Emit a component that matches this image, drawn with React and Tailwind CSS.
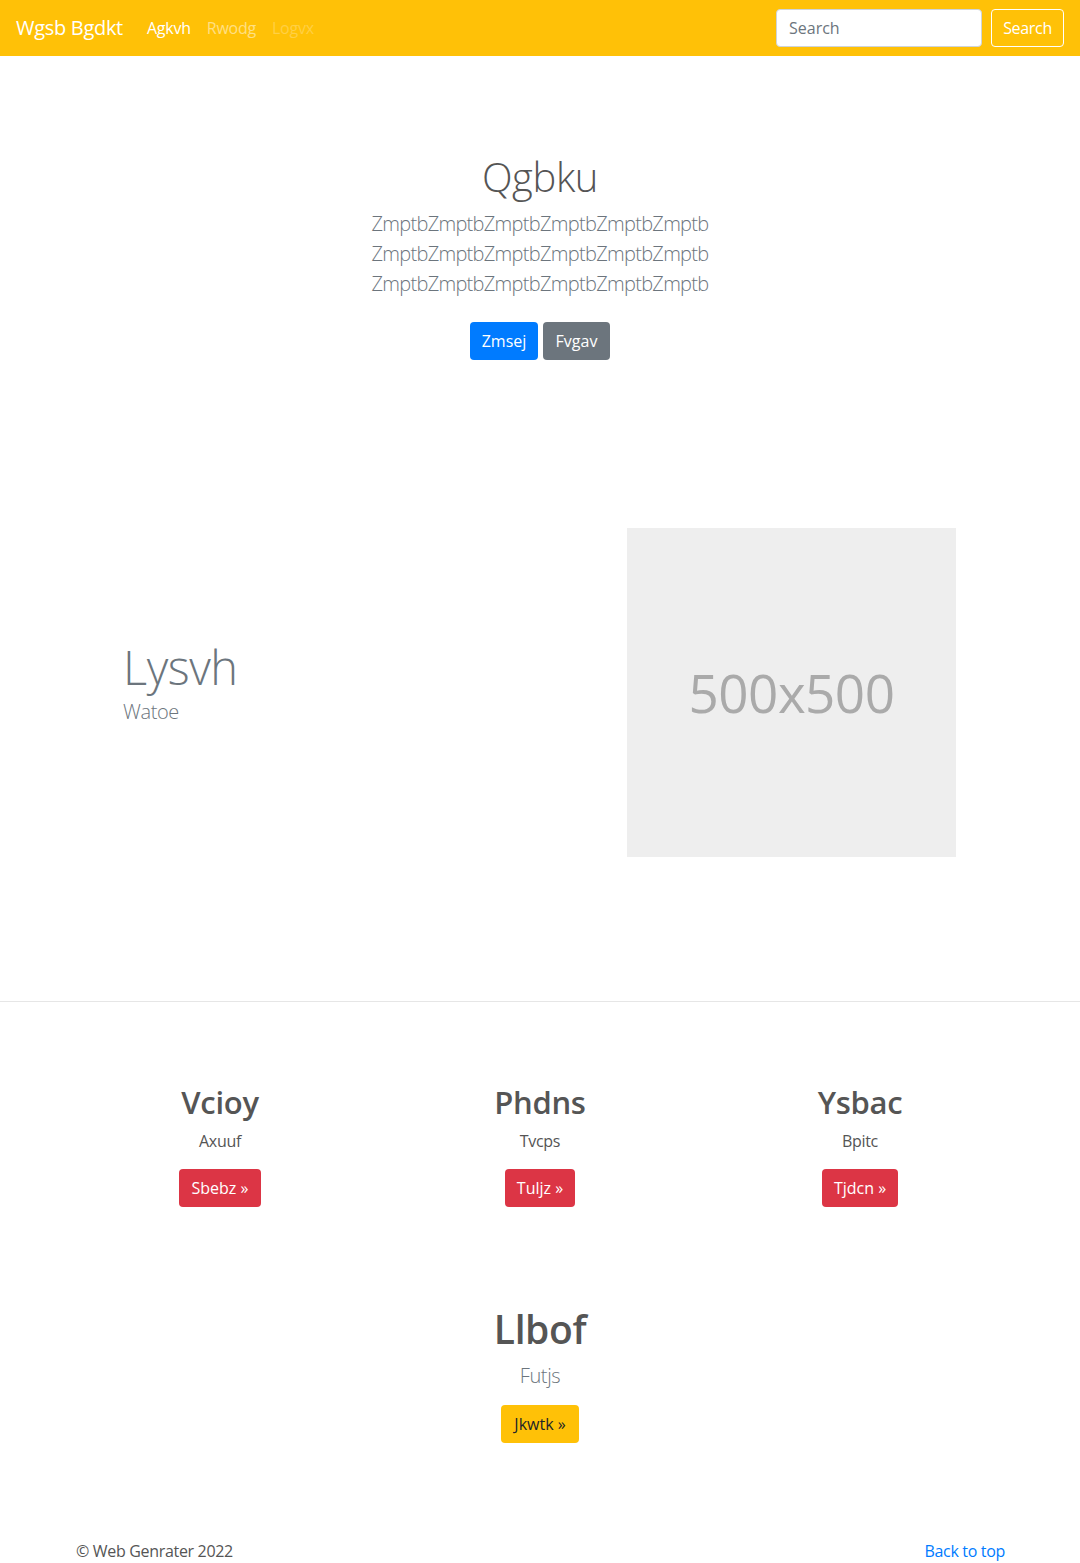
import React from "react";

const F = { fontFamily: '"Open Sans", "Noto Sans", "Liberation Sans", sans-serif' };

export default function App() {
  return (
    <div style={F} className="bg-white text-[#555] text-[16px] leading-[1.5] w-[1080px]">
      {/* Navbar */}
      <nav className="h-[56px] bg-[#ffc107] flex items-center px-[16px]">
        <span className="text-white text-[20px] leading-[30px] mr-[16px] tracking-[-0.015em]">Wgsb Bgdkt</span>
        <div className="flex items-center tracking-[-0.015em]">
          <span className="px-[8px] text-white">Agkvh</span>
          <span className="px-[8px] text-[rgba(255,255,255,0.5)]">Rwodg</span>
          <span className="px-[8px] text-[rgba(255,255,255,0.25)]">Logvx</span>
        </div>
        <div className="ml-auto flex items-center">
          <div className="w-[206px] h-[38px] bg-white border border-[#ced4da] rounded-[4px] px-[12px] flex items-center text-[#6c757d]">
            Search
          </div>
          <div className="ml-[9px] w-[73px] h-[38px] border border-white rounded-[4px] text-white flex items-center justify-center tracking-[-0.02em]">
            Search
          </div>
        </div>
      </nav>

      {/* Hero */}
      <section className="pt-[97px] pb-[96px] text-center">
        <div className="w-[450px] mx-auto">
          <h1 className="text-[40px] leading-[48px] font-light text-[#555] mb-[8px] tracking-[-0.01em]">Qgbku</h1>
          <p className="text-[20px] leading-[30px] font-light text-[#6c757d] tracking-[-0.035em]">
            ZmptbZmptbZmptbZmptbZmptbZmptb ZmptbZmptbZmptbZmptbZmptbZmptb ZmptbZmptbZmptbZmptbZmptbZmptb
          </p>
          <div className="pt-[23px] pb-[8px] flex justify-center gap-[5px]">
            <span className="h-[38px] w-[68px] rounded-[4px] bg-[#007bff] text-white flex items-center justify-center">Zmsej</span>
            <span className="h-[38px] w-[67px] rounded-[4px] bg-[#6c757d] text-white flex items-center justify-center">Fvgav</span>
          </div>
        </div>
      </section>

      {/* Featurette */}
      <section className="pt-[64px] pb-[144px]">
        <div className="w-[960px] mx-auto px-[15px] flex items-center">
          <div className="w-[450px] pl-[48px]">
            <h2 className="text-[47px] leading-[60px] font-light text-[#6c757d] tracking-[-0.01em]">Lysvh</h2>
            <p className="text-[20px] leading-[30px] font-light text-[#6c757d] mb-[22px] tracking-[-0.02em]">Watoe</p>
          </div>
          <div className="ml-[102px] w-[329px] h-[329px] bg-[#eeeeee] flex items-center justify-center">
            <span className="text-[53px] text-[#aaaaaa] leading-none tracking-[-0.01em]">500x500</span>
          </div>
        </div>
      </section>

      <div className="border-t border-[#e6e6e6]"></div>

      {/* Three columns */}
      <section className="pt-[81px]">
        <div className="w-[960px] mx-auto grid grid-cols-3 text-center">
          {[
            ["Vcioy", "Axuuf", "Sbebz", "w-[82px]"],
            ["Phdns", "Tvcps", "Tuljz", "w-[70px]"],
            ["Ysbac", "Bpitc", "Tjdcn", "w-[76px]"],
          ].map(([h, s, b, w]) => (
            <div key={h} className="px-[15px] pb-[16px]">
              <h2 className="text-[31px] leading-[38px] font-semibold text-[#555] mb-[8px] tracking-[-0.01em]">{h}</h2>
              <p className="mb-[16px] text-[#555] tracking-[-0.02em]">{s}</p>
              <div className="flex justify-center">
                <span className={"h-[38px] rounded-[4px] bg-[#dc3545] text-white flex items-center justify-center " + w}>
                  {b} »
                </span>
              </div>
            </div>
          ))}
        </div>

        <div className="text-center pt-[82px]">
          <h1 className="text-[39px] leading-[48px] font-semibold text-[#555] mb-[8px] tracking-[-0.01em]">Llbof</h1>
          <p className="text-[20px] leading-[30px] font-light text-[#6c757d] mb-[14px] tracking-[-0.02em]">Futjs</p>
          <div className="flex justify-center">
            <span className="h-[38px] w-[78px] rounded-[4px] bg-[#ffc107] text-[#212529] flex items-center justify-center">
              Jkwtk »
            </span>
          </div>
        </div>
      </section>

      {/* Footer */}
      <footer className="pt-[96px] pb-[24px]">
        <div className="w-[960px] mx-auto px-[15px] flex justify-between tracking-[-0.02em]">
          <p className="text-[#555] pl-[1px]">© Web Genrater 2022</p>
          <span className="text-[#007bff]">Back to top</span>
        </div>
      </footer>
    </div>
  );
}
